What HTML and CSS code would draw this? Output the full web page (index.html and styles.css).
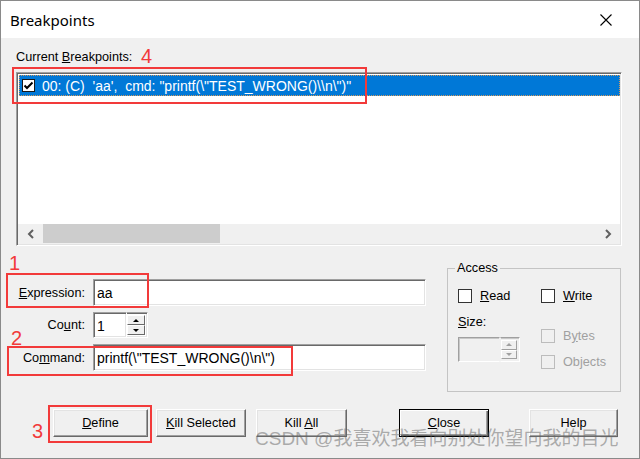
FILE: index.html
```html
<!DOCTYPE html>
<html lang="en">
<head>
    <meta charset="UTF-8">
    <title>Breakpoints</title>
    <link rel="stylesheet" href="styles.css">
</head>
<body>
    <div class="window">
        <div class="titlebar">
            <span class="title">Breakpoints</span>
            <svg class="close-x" width="12" height="12" viewBox="0 0 12 12">
                <path d="M0.5 0.5 L11.5 11.5 M11.5 0.5 L0.5 11.5" stroke="#000" stroke-width="1.1" fill="none"/>
            </svg>
        </div>

        <div class="client">
            <div class="list-label">Current <u>B</u>reakpoints:</div>
            <div class="listbox">
                <div class="rows">
                    <div class="row selected">
                        <svg class="row-check" width="13" height="13" viewBox="0 0 13 13">
                            <rect x="0.5" y="0.5" width="12" height="12" fill="#fff" stroke="#1a1a1a"/>
                            <path d="M2.5 6.5 L5 9 L10.5 3.5" stroke="#000" stroke-width="2" fill="none"/>
                        </svg>
                        <span class="row-text">00: (C)&nbsp; 'aa',&nbsp; cmd: "printf(\"TEST_WRONG()\\n\")"</span>
                    </div>
                </div>
                <div class="hscroll">
                    <div class="sb-btn">
                        <svg width="8" height="10" viewBox="0 0 8 10"><path d="M6 1 L2 5 L6 9" stroke="#606060" stroke-width="2" fill="none"/></svg>
                    </div>
                    <div class="sb-thumb"></div>
                    <div class="sb-track"></div>
                    <div class="sb-btn">
                        <svg width="8" height="10" viewBox="0 0 8 10"><path d="M2 1 L6 5 L2 9" stroke="#606060" stroke-width="2" fill="none"/></svg>
                    </div>
                </div>
            </div>

            <div class="middle">
                <div class="fields">
                    <label class="field-label"><u>E</u>xpression:</label>
                    <div class="edit">aa</div>

                    <label class="field-label">Co<u>u</u>nt:</label>
                    <div class="count-box">
                        <div class="edit count-edit">1</div>
                        <div class="spin">
                            <div class="spin-btn"><span class="tri up"></span></div>
                            <div class="spin-btn"><span class="tri down"></span></div>
                        </div>
                    </div>

                    <label class="field-label">Co<u>m</u>mand:</label>
                    <div class="edit">printf(\"TEST_WRONG()\n\")</div>
                </div>

                <fieldset class="access">
                    <legend>Access</legend>
                    <div class="access-cols">
                        <div class="access-col first">
                            <div class="chk-row"><span class="chk"></span><span><u>R</u>ead</span></div>
                            <div class="size-label"><u>S</u>ize:</div>
                            <div class="size-box">
                                <div class="size-edit"></div>
                                <div class="spin disabled">
                                    <div class="spin-btn"><span class="tri up"></span></div>
                                    <div class="spin-btn"><span class="tri down"></span></div>
                                </div>
                            </div>
                        </div>
                        <div class="access-col">
                            <div class="chk-row"><span class="chk"></span><span><u>W</u>rite</span></div>
                            <div class="chk-row disabled bytes"><span class="chk"></span><span>B<u>y</u>tes</span></div>
                            <div class="chk-row disabled objects"><span class="chk"></span><span>Objects</span></div>
                        </div>
                    </div>
                </fieldset>
            </div>

            <div class="buttons">
                <button class="btn btn-define"><u>D</u>efine</button>
                <button class="btn btn-kill"><u>K</u>ill Selected</button>
                <button class="btn btn-killall">Kill <u>A</u>ll</button>
                <button class="btn btn-close default"><u>C</u>lose</button>
                <button class="btn btn-help">Help</button>
            </div>
        </div>
    </div>

    <!-- annotations drawn over the screenshot -->
    <div class="mark box4"></div>
    <div class="num num4">4</div>
    <div class="mark box1"></div>
    <div class="num num1">1</div>
    <div class="mark box2"></div>
    <div class="num num2">2</div>
    <div class="mark box3"></div>
    <div class="num num3">3</div>

    <div class="watermark">CSDN @我喜欢我看向别处你望向我的目光</div>
</body>
</html>
```

FILE: styles.css
```css
* {
    box-sizing: border-box;
}
body {
    margin: 0;
    width: 640px;
    height: 459px;
    overflow: hidden;
    position: relative;
    font-family: "Liberation Sans", Arial, sans-serif;
    font-size: 12.7px;
    color: #000;
    background: #fff;
}
.window {
    height: 459px;
    border: 1px solid #8a8a8a;
    display: flex;
    flex-direction: column;
}
.titlebar {
    height: 37px;
    background: #fff;
    display: flex;
    align-items: center;
    justify-content: space-between;
    padding: 0 27px 0 9px;
}
.title {
    font-family: "Noto Sans", "Liberation Sans", sans-serif;
    font-size: 15px;
}
.client {
    flex: 1;
    background: #f0f0f0;
    padding: 11px 0 0 15px;
}
.list-label {
    line-height: 16px;
}
.listbox {
    margin-top: 7px;
    width: 606px;
    height: 174px;
    display: flex;
    flex-direction: column;
    border: 1px solid;
    border-color: #a0a0a0 #fff #fff #a0a0a0;
    box-shadow: inset 1px 1px #696969, inset -1px -1px #e3e3e3;
    padding: 1px;
    background: #fff;
}
.rows {
    flex: 1;
    padding: 1px 0 0 1px;
}
.row {
    height: 21px;
    display: flex;
    align-items: center;
}
.row.selected {
    background: #0078d7;
    border: 1px dotted #d49a5c;
    color: #fff;
}
.row-check {
    margin-left: 2px;
    flex-shrink: 0;
}
.row-text {
    margin-left: 7px;
    font-size: 14px;
    white-space: pre;
}
.hscroll {
    height: 20px;
    display: flex;
    background: #f0f0f0;
}
.sb-btn {
    width: 25px;
    display: flex;
    align-items: center;
    justify-content: center;
}
.sb-thumb {
    width: 177px;
    height: 19px;
    background: #cdcdcd;
}
.sb-track {
    flex: 1;
}
.middle {
    margin-top: 15px;
    display: flex;
    align-items: flex-start;
}
.fields {
    width: 410px;
    margin-top: 18px;
    display: grid;
    grid-template-columns: 69px 333px;
    grid-template-rows: 27px 26px 27px;
    column-gap: 8px;
    row-gap: 6px;
}
.field-label {
    align-self: center;
    justify-self: end;
}
.edit {
    background: #fff;
    border: 1px solid;
    border-color: #a0a0a0 #fff #fff #a0a0a0;
    box-shadow: inset 1px 1px #696969, inset -1px -1px #e3e3e3;
    font-size: 14px;
    padding: 4px 3px 0;
    line-height: 18px;
}
.count-box {
    display: flex;
    width: 55px;
    height: 26px;
}
.count-edit {
    width: 33px;
    border-right: none;
}
.spin {
    width: 22px;
    display: flex;
    flex-direction: column;
    background: #fff;
    border: 1px solid;
    border-color: #a0a0a0 #fff #fff transparent;
    box-shadow: inset 0 1px #696969, inset -1px -1px #e3e3e3;
    padding: 2px 2px 2px 0;
}
.spin-btn {
    flex: 1;
    background: #f0f0f0;
    border: 1px solid;
    border-color: #fff #696969 #696969 #fff;
    display: flex;
    align-items: center;
    justify-content: center;
}
.tri {
    width: 0;
    height: 0;
    border-left: 3px solid transparent;
    border-right: 3px solid transparent;
}
.tri.up {
    border-bottom: 3px solid #000;
}
.tri.down {
    border-top: 3px solid #000;
}
.access {
    margin: 0 0 0 21px;
    width: 174px;
    height: 131px;
    border: 1px solid #c4c4c4;
    padding: 13px 0 0 10px;
    min-width: 0;
}
.access legend {
    padding: 0 2px;
    margin-left: -3px;
    line-height: 15px;
}
.access-cols {
    display: flex;
}
.access-col.first {
    width: 83px;
}
.chk-row {
    display: flex;
    align-items: center;
    height: 14px;
}
.chk {
    width: 14px;
    height: 14px;
    background: #fff;
    border: 1px solid #333;
    margin-right: 8px;
    flex-shrink: 0;
}
.chk-row.disabled {
    color: #a0a0a0;
}
.chk-row.disabled .chk {
    background: #f0f0f0;
    border-color: #bcbcbc;
}
.chk-row.bytes {
    margin-top: 26px;
}
.chk-row.objects {
    margin-top: 12px;
}
.size-label {
    margin-top: 12px;
    line-height: 15px;
}
.size-box {
    margin-top: 7px;
    width: 62px;
    height: 25px;
    display: flex;
}
.size-edit {
    flex: 1;
    background: #f0f0f0;
    border: 1px solid;
    border-color: #a0a0a0 transparent #fff #a0a0a0;
    box-shadow: inset 1px 1px #c8c8c8;
}
.spin.disabled {
    width: 20px;
    background: #f0f0f0;
    box-shadow: inset 0 1px #c8c8c8;
}
.spin.disabled .spin-btn {
    border-color: #fff #a0a0a0 #a0a0a0 #fff;
}
.spin.disabled .tri.up {
    border-bottom-color: #a0a0a0;
}
.spin.disabled .tri.down {
    border-top-color: #a0a0a0;
}
.buttons {
    margin-top: 17px;
    display: flex;
}
.btn {
    height: 28px;
    width: 90px;
    font-family: inherit;
    font-size: 12.7px;
    color: #000;
    background: #f0f0f0;
    border: 1px solid;
    border-color: #fff #696969 #696969 #fff;
    box-shadow: inset -1px -1px #a0a0a0, inset 1px 1px #e3e3e3;
    padding: 0;
}
.btn.default {
    border: 1px solid #000;
    box-shadow: inset 1px 1px #fff, inset -1px -1px #696969, inset -2px -2px #a0a0a0;
}
.btn-define {
    width: 95px;
    margin-left: 37px;
}
.btn-kill {
    margin-left: 8px;
}
.btn-killall {
    margin-left: 10px;
    width: 91px;
}
.btn-close {
    margin-left: 52px;
}
.btn-help {
    margin-left: 40px;
    width: 89px;
}
.mark {
    position: absolute;
    border: 2px solid #f23a3a;
}
.box4 { left: 12px; top: 67px; width: 355px; height: 37px; }
.box1 { left: 6px; top: 273px; width: 143px; height: 35px; }
.box2 { left: 7px; top: 346px; width: 286px; height: 30px; }
.box3 { left: 48px; top: 405px; width: 104px; height: 38px; }
.num {
    position: absolute;
    color: #f23a3a;
    font-size: 20px;
    line-height: 20px;
}
.num4 { left: 141px; top: 46px; }
.num1 { left: 9px; top: 253px; }
.num2 { left: 11px; top: 328px; }
.num3 { left: 32px; top: 421px; }
.watermark {
    position: absolute;
    left: 255px;
    top: 428px;
    font-family: "Liberation Sans", "Noto Sans CJK SC", sans-serif;
    font-size: 19px;
    line-height: 22px;
    color: rgba(100, 100, 100, 0.5);
    white-space: nowrap;
}
```
